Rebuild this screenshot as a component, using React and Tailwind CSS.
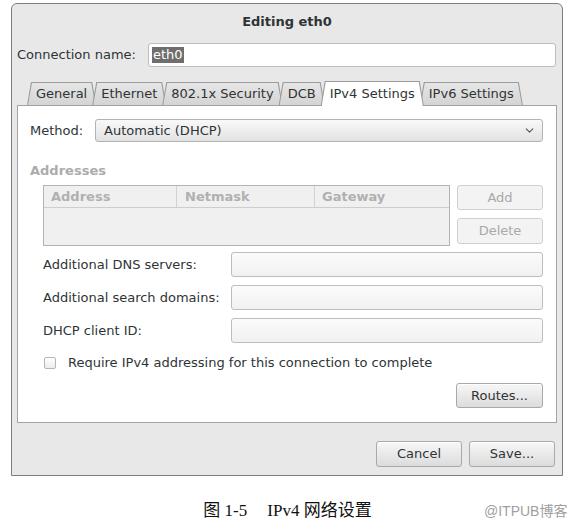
import { ChevronDown } from 'lucide-react'

const tabs = ['General', 'Ethernet', '802.1x Security', 'DCB', 'IPv4 Settings', 'IPv6 Settings']
const activeTab = 'IPv4 Settings'

const trapezoid = { clipPath: 'polygon(4px 0, calc(100% - 4px) 0, 100% 100%, 0 100%)' }

function Tab({ label, active, index }) {
  return (
    <div
      className={`relative ${index === 0 ? '' : '-ml-[4px]'} ${active ? 'h-[25px] mb-[-1px]' : 'h-[23px]'}`}
      style={{ zIndex: active ? 20 : index }}
    >
      <div className="h-full bg-[#9c9c9c] p-[1px] pb-0" style={trapezoid}>
        <div
          className={`h-full flex items-center px-[8px] text-[13px] ${active ? 'bg-white' : 'bg-gradient-to-b from-[#e6e6e6] to-[#d4d4d4]'} text-[#2e3436]`}
          style={trapezoid}
        >
          {label}
        </div>
      </div>
    </div>
  )
}

function Button({ children, disabled, className = '' }) {
  return (
    <div
      className={`flex items-center justify-center rounded-[3px] border text-[13px] ${
        disabled
          ? 'border-[#cfcfcf] bg-[#f3f3f3] text-[#a9a9a9]'
          : 'border-[#a9a9a9] bg-gradient-to-b from-[#f7f7f7] to-[#dcdcdc] text-[#2e3436] shadow-[0_1px_0_rgba(255,255,255,0.8)_inset]'
      } ${className}`}
    >
      {children}
    </div>
  )
}

function FieldRow({ label }) {
  return (
    <div className="flex items-center h-[25px]">
      <div className="w-[188px] text-[13px] text-[#2e3436]">{label}</div>
      <div className="flex-1 h-full rounded-[3px] border border-[#bdbdbd] bg-gradient-to-b from-[#fbfbfb] to-[#f1f1f1]" />
    </div>
  )
}

export default function App() {
  return (
    <div className="w-[574px] h-[526px] bg-white overflow-hidden" style={{ fontFamily: '"DejaVu Sans", "Noto Sans", sans-serif' }}>
      {/* Dialog */}
      <div className="ml-[11px] mt-[3px] w-[552px] h-[473px] border border-[#7d7d7d] rounded-t-[6px] bg-[#e8e8e8] flex flex-col">
        <div className="h-[36px] flex items-center justify-center text-[13px] font-bold text-[#2e3436]">
          Editing eth0
        </div>

        {/* Connection name */}
        <div className="mt-[3px] ml-[5px] mr-[6px] flex items-center h-[24px]">
          <div className="w-[131px] text-[13px] text-[#2e3436]">Connection name:</div>
          <div className="flex-1 h-full rounded-[3px] border border-[#bdbdbd] bg-white flex items-center pl-[3px]">
            <span className="bg-[#6e6e6e] text-white text-[13px] leading-[16px] px-[1px]">eth0</span>
          </div>
        </div>

        {/* Tabs */}
        <div className="mt-[13px] ml-[15px] flex items-end h-[25px]">
          {tabs.map((t, i) => (
            <Tab key={t} label={t} index={i} active={t === activeTab} />
          ))}
        </div>

        {/* Notebook panel */}
        <div className="relative z-10 ml-[5px] mr-[5px] h-[318px] border border-[#a3a3a3] bg-white px-[12px] pt-[13px]">
          <div className="flex items-center h-[23px]">
            <div className="w-[65px] text-[13px] text-[#2e3436]">Method:</div>
            <div className="flex-1 mr-[1px] h-full rounded-[3px] border border-[#b3b3b3] bg-gradient-to-b from-[#f9f9f9] to-[#e2e2e2] flex items-center justify-between pl-[8px] pr-[6px]">
              <span className="text-[13px] text-[#2e3436]">Automatic (DHCP)</span>
              <ChevronDown size={13} strokeWidth={2} className="text-[#555]" />
            </div>
          </div>

          <div className="mt-[20px] text-[13px] font-bold text-[#acacac] leading-[18px]">Addresses</div>

          <div className="mt-[5px] ml-[13px] flex gap-[7px]">
            <div className="w-[407px] h-[61px] border border-[#b3b3b3] bg-[#f0f0f0] flex flex-col">
              <div className="h-[22px] flex border-b border-[#cdcdcd] text-[13px] font-bold text-[#b0b0b0]">
                <div className="w-[133px] pl-[7px] border-r border-[#d2d2d2] flex items-center">Address</div>
                <div className="w-[138px] pl-[8px] border-r border-[#d2d2d2] flex items-center">Netmask</div>
                <div className="flex-1 pl-[7px] flex items-center">Gateway</div>
              </div>
            </div>
            <div className="flex flex-col gap-[8px]">
              <Button disabled className="w-[86px] h-[25px]">Add</Button>
              <Button disabled className="w-[86px] h-[26px]">Delete</Button>
            </div>
          </div>

          <div className="mt-[6px] ml-[13px] mr-[1px] flex flex-col gap-[8px]">
            <FieldRow label="Additional DNS servers:" />
            <FieldRow label="Additional search domains:" />
            <FieldRow label="DHCP client ID:" />
          </div>

          <div className="mt-[14px] ml-[14px] flex items-center h-[12px]">
            <div className="w-[12px] h-[12px] rounded-[2px] border border-[#b5b5b5] bg-gradient-to-b from-white to-[#ececec]" />
            <span className="ml-[12px] text-[13px] text-[#2e3436]">Require IPv4 addressing for this connection to complete</span>
          </div>

          <div className="mt-[14px] flex justify-end mr-[1px]">
            <Button className="w-[87px] h-[25px]">Routes...</Button>
          </div>
        </div>

        {/* Dialog buttons */}
        <div className="mt-[18px] mr-[7px] flex justify-end gap-[7px]">
          <Button className="w-[86px] h-[26px]">Cancel</Button>
          <Button className="w-[86px] h-[26px]">Save...</Button>
        </div>
      </div>

      {/* Caption */}
      <div className="mt-[24px] h-[22px] flex items-center">
        <div className="flex-1 flex justify-center pl-[91px]">
          <span className="text-[17px] text-[#111]" style={{ fontFamily: '"Liberation Serif", "Noto Sans CJK SC", serif' }}>
            图 1-5<span className="inline-block w-[20px]" />IPv4 网络设置
          </span>
        </div>
        <div className="w-[90px] text-[14px] text-[#a0a0a0]" style={{ fontFamily: '"Liberation Sans", "Noto Sans CJK SC", sans-serif' }}>
          @ITPUB博客
        </div>
      </div>
    </div>
  )
}
